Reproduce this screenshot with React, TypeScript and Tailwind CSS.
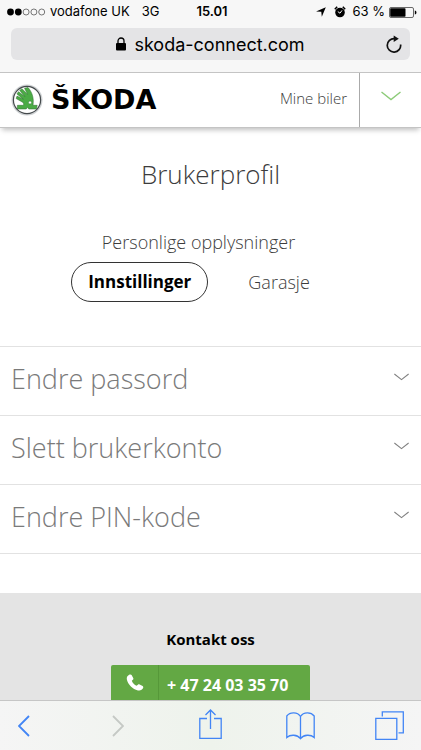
import type { ReactNode } from 'react';
import clsx from 'clsx';

const tabs = [
  { label: 'Personlige opplysninger', active: false },
  { label: 'Innstillinger', active: true },
  { label: 'Garasje', active: false },
];

const settings = ['Endre passord', 'Slett brukerkonto', 'Endre PIN-kode'];

export default function App() {
  return (
    <div className="flex h-screen flex-col overflow-hidden bg-white font-['Open_Sans',sans-serif] text-[#3c3c3c]">
      <BrowserBar />
      <SiteHeader />

      <main className="min-h-0 flex-1 overflow-hidden">
        <h1 className="mt-[26px] text-center text-[26px] leading-10 font-light">Brukerprofil</h1>

        {/* profile sections */}
        <nav className="mt-7 flex flex-wrap justify-center gap-x-6 pr-15 pl-9">
          {tabs.map((tab) => (
            <button
              key={tab.label}
              type="button"
              className={clsx(
                'h-10 rounded-full px-4',
                tab.active ? 'border border-[#333] text-[17px] font-bold text-black' : 'text-[18px] font-light',
              )}
            >
              {tab.label}
            </button>
          ))}
        </nav>

        <ul className="mt-11 border-t border-[#e2e2e2]">
          {settings.map((label) => (
            <li key={label} className="border-b border-[#e2e2e2]">
              <button
                type="button"
                className="flex h-[68px] w-full items-center justify-between pr-3 pb-1 pl-[11px] text-left text-[27px] font-light text-[#7a7a7a]"
              >
                {label}
                <Chevron className="mb-1 h-2 w-[15px] text-[#808080]" />
              </button>
            </li>
          ))}
        </ul>

        <footer className="mt-[39px] flex h-60 flex-col items-center bg-[#e4e4e4] pt-[34px]">
          <h2 className="text-[15px] leading-6 font-bold text-black">Kontakt oss</h2>
          <a
            href="tel:+4724033570"
            className="mt-3.5 flex h-12 w-[199px] rounded-xs bg-[#63a844] text-base font-bold text-white"
          >
            <span className="flex w-12 justify-center border-r border-[#569839] pt-2">
              <PhoneIcon />
            </span>
            <span className="pt-2 pl-2 leading-6">+ 47 24 03 35 70</span>
          </a>
        </footer>
      </main>

      <Toolbar />
    </div>
  );
}

function BrowserBar() {
  return (
    <div className="shrink-0 bg-[#f7f7f7] pb-3 font-['Inter',sans-serif] text-black">
      <div className="grid h-6 grid-cols-[1fr_auto_1fr] items-center pr-1 pl-[7px] text-[13px]">
        <div className="flex items-center">
          <svg className="mr-1 h-2 w-[39px]" viewBox="0 0 39 8" aria-hidden="true">
            <circle cx="3.5" cy="4" r="3.4" />
            <circle cx="11.3" cy="4" r="3.4" />
            <g fill="none" stroke="#555" strokeWidth="0.8">
              <circle cx="19.1" cy="4" r="3" />
              <circle cx="26.9" cy="4" r="3" />
              <circle cx="34.7" cy="4" r="3" />
            </g>
          </svg>
          <span>vodafone UK</span>
          <span className="ml-3">3G</span>
        </div>
        <span className="font-semibold">15.01</span>
        <div className="flex items-center justify-end">
          <svg className="mr-2 h-[10px] w-[10px]" viewBox="0 0 10 10" aria-hidden="true">
            <path d="M9.8.2 5.8 9.8 5.3 4.8 0 4.5Z" />
          </svg>
          <svg className="h-3 w-3" viewBox="0 0 12 12" aria-hidden="true">
            <circle cx="6" cy="6.5" r="4.8" />
            <path d="M.8 3.2 3.2.8M11.2 3.2 8.8.8" stroke="#000" strokeWidth="1.5" />
            <path d="m3.8 5.6 2.2 1.6 2-2.8" fill="none" stroke="#f7f7f7" strokeWidth="1" />
          </svg>
          <span className="ml-1.5">63 %</span>
          <svg className="ml-1 h-[11px] w-7" viewBox="0 0 28 11" aria-hidden="true">
            <rect x=".5" y=".5" width="24" height="10" rx="1.5" fill="none" stroke="#444" strokeWidth=".8" />
            <rect x="1.2" y="1.2" width="15.3" height="8.6" rx=".8" />
            <path d="M25.8 3.5c2.2.5 2.2 3.5 0 4Z" />
          </svg>
        </div>
      </div>

      <div className="mx-[11px] mt-1 grid h-8 grid-cols-[1fr_auto_1fr] items-center rounded-md bg-[#e4e4e6]">
        <span />
        <div className="flex items-center gap-2 text-[18px]">
          <svg className="h-[14px] w-[10px]" viewBox="0 0 10 14" aria-hidden="true">
            <rect y="6" width="10" height="7.5" rx="1" />
            <path d="M2 6.5V4a3 3 0 0 1 6 0v2.5" fill="none" stroke="#000" strokeWidth="1.3" />
          </svg>
          skoda-connect.com
        </div>
        <button type="button" aria-label="Last inn på nytt" className="mr-2 justify-self-end">
          <svg className="h-[18px] w-4" viewBox="0 0 16 18" fill="none">
            <path d="M14.6 9.5A6.7 6.7 0 1 1 8.5 3.7" stroke="#111" strokeWidth="1.7" />
            <path d="M7.7.6 12.8 3.8 7.7 7Z" fill="#111" />
          </svg>
        </button>
      </div>
    </div>
  );
}

function SiteHeader() {
  return (
    <header className="flex h-14 shrink-0 items-stretch border-y border-[#c4c4c4] bg-white shadow-[0_4px_5px_-2px_rgba(0,0,0,0.25)]">
      <a href="#" className="flex flex-1 items-center gap-2 pl-[11px]" aria-label="ŠKODA">
        <SkodaEmblem />
        <span className="font-['DejaVu_Sans',sans-serif] text-[27px] leading-8 font-bold text-black">ŠKODA</span>
      </a>
      <a href="#" className="flex items-center pr-3 pb-1 text-[15px] font-light">
        Mine biler
      </a>
      <button
        type="button"
        aria-label="Meny"
        className="flex w-[62px] items-center justify-center border-l border-[#aaaaaa] pb-2"
      >
        <Chevron className="h-[10px] w-5 text-[#8ccb78]" />
      </button>
    </header>
  );
}

function Toolbar() {
  return (
    <div className="flex h-[50px] shrink-0 items-center justify-between border-t border-[#c6c6c6] bg-linear-to-r from-[#f5f5f5] via-[#eef3ec] to-[#f5f5f5] pr-[17px] pl-[18px] text-[#4285f5]">
      <ToolButton label="Tilbake" className="w-3">
        <path d="M11 1 1 11l10 10" strokeWidth="1.8" />
      </ToolButton>
      <ToolButton label="Frem" className="ml-[22px] w-3 text-[#c5c9c5]">
        <path d="m1 1 10 10L1 21" strokeWidth="1.8" />
      </ToolButton>
      <ToolButton label="Del" className="ml-3.5 w-[23px]" viewBox="0 0 23 30" tall>
        <path d="M8 9.5H.8v19.8h21.4V9.5H15M11.5 20V1M6.5 6l5-5 5 5" />
      </ToolButton>
      <ToolButton label="Bokmerker" className="ml-1 w-[29px]" viewBox="0 0 29 28">
        <path d="M14.5 4.5C11.5-.2 4-.2.8 4v21.5c3.5-3.2 10.5-3.2 13.7 1.2 3.2-4.4 10.2-4.4 13.7-1.2V4c-3.2-4.2-10.7-4.2-13.7.5Zm0 0v22" />
      </ToolButton>
      <ToolButton label="Faner" className="w-[29px]" viewBox="0 0 29 29">
        <path d="M.8 7.3h21v21h-21zM7.3 5.5V.8h21v21h-4.8" />
      </ToolButton>
    </div>
  );
}

interface ToolButtonProps {
  label: string;
  className: string;
  viewBox?: string;
  tall?: boolean;
  children: ReactNode;
}

function ToolButton({ label, className, viewBox = '0 0 12 22', tall, children }: ToolButtonProps) {
  return (
    <button type="button" aria-label={label} className={className}>
      <svg
        className={clsx('w-full', tall && 'mb-1')}
        viewBox={viewBox}
        fill="none"
        stroke="currentColor"
        strokeWidth="1.3"
      >
        {children}
      </svg>
    </button>
  );
}

function Chevron({ className }: { className: string }) {
  return (
    <svg className={className} viewBox="0 0 20 10" fill="none" stroke="currentColor" strokeWidth="1.4" aria-hidden="true">
      <path d="m.5 1 9.5 7.5L19.5 1" />
    </svg>
  );
}

function PhoneIcon() {
  return (
    <svg className="h-5 w-5" viewBox="0 0 20 20" fill="#fff" aria-hidden="true">
      <path d="M4.6 1.6c.8-.4 1.600-.2 2 .5l1.600 2.900c.4.7.2 1.400-.3 1.800l-1.100.9c.9 2.300 2.600 4.100 4.800 5.100l1.300-1.100c.5-.5 1.100-.5 1.700-.2l3 1.600c.7.4.9 1.300.5 2-.9 1.900-2.900 2.900-5.200 2.300C7.500 16 3.400 11.900 1.900 6.700 1.300 4.600 2.500 2.500 4.600 1.600Z" />
    </svg>
  );
}

function SkodaEmblem() {
  return (
    <svg className="h-8 w-8" viewBox="0 0 32 32" aria-hidden="true">
      <circle cx="16" cy="16" r="15.500" fill="#cfd2d4" />
      <circle cx="16" cy="16" r="13.600" fill="#fff" stroke="#454a4c" strokeWidth="1.200" />
      <path
        d="M6.400 25V21.300H11.500C13.300 21.300 13 19.300 11.600 18.200L5.200 14.600 6 12.100 12.400 15.200 5.900 9.900 7.500 7.700 14 12.500 8.700 6.400 10.900 4.700 16.600 10.200 13.500 4.200 17 3.500C21 8 23.200 14 22 21.300H26.200L25.400 25H17.800L16.600 23.300 15.200 25Z"
        fill="#4bab45"
        stroke="#2c6a2f"
        strokeWidth=".5"
      />
      <circle cx="19" cy="18.500" r="1.500" fill="#fff" stroke="#2c6a2f" strokeWidth=".4" />
    </svg>
  );
}
